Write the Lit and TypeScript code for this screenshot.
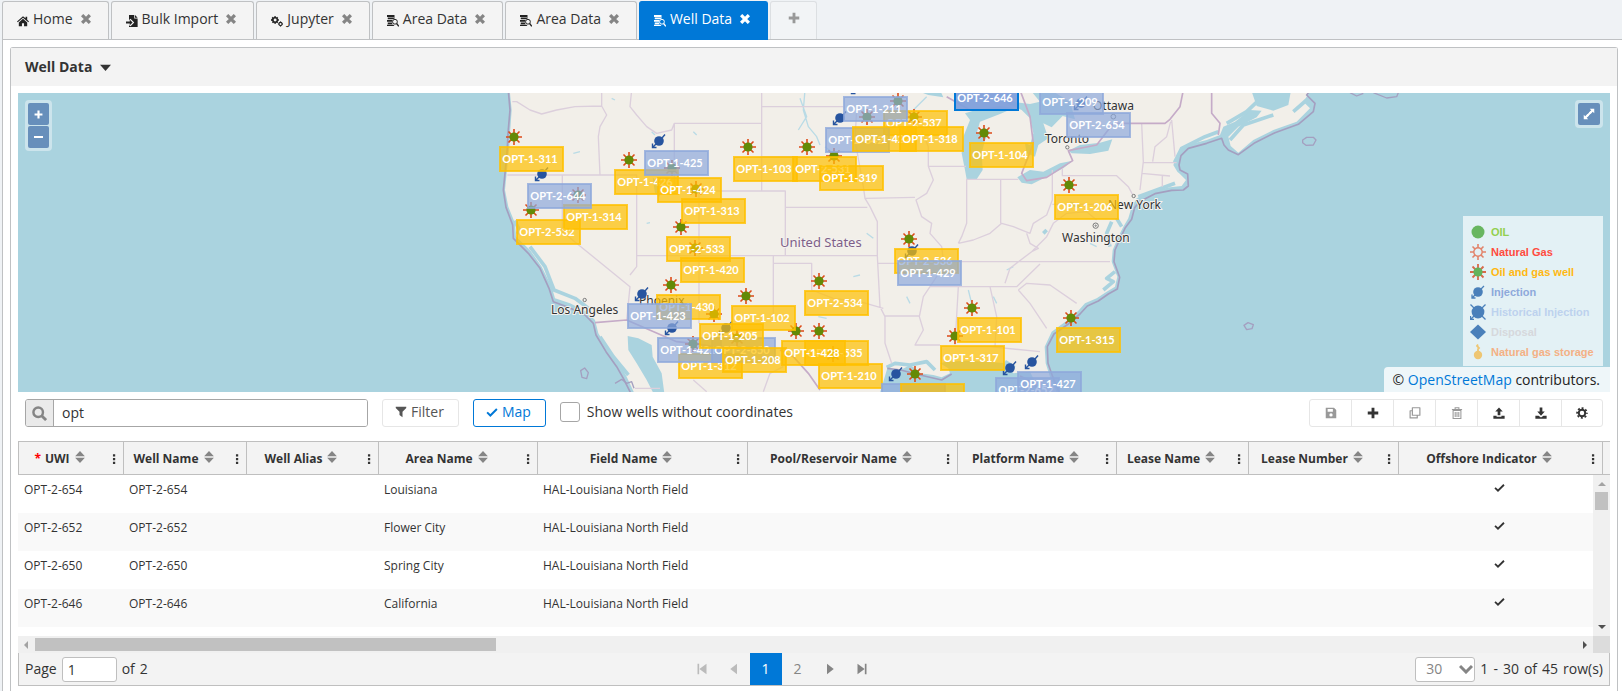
import { LitElement, html, svg, css } from "lit";
import { customElement, property, state } from "lit/decorators.js";
import { classMap } from "lit/directives/class-map.js";

const shapes: Record<string, unknown> = {
  home: svg`<path d="M8 1.5 0 8.6l1 1.2L8 3.7l7 6.1 1-1.2-2.4-2.2V2.4h-2.2v2z"/><path d="M8 5 2.4 9.900V15h4.200v-4h2.800v4h4.200V9.900z"/>`,
  import: svg`<path d="M4 0h7v4.500h4.500V16H4v-2.500l2 1.500 5-5-5-5-2 1.600z"/><path d="M12 0v3.500h3.500z"/><path d="M0 8.700h5V6.400L8.800 10 5 13.600v-2.300H0z"/>`,
  cogs: svg`<path fill-rule="evenodd" d="M4.500 1.500h2l.4 1.700 1.300-.8 1.500 1.500-.9 1.300 1.700.4v2l-1.700.5.9 1.400-1.500 1.500-1.300-.9-.4 1.700h-2l-.4-1.700-1.400.9-1.500-1.500.9-1.400L0 7.600v-2l1.700-.4-.9-1.300 1.500-1.500 1.400.8zM5.500 4.700a1.900 1.900 0 1 0 0 3.900 1.900 1.900 0 0 0 0-3.900z"/><circle cx="12.700" cy="12" r="2.100" fill="none" stroke="currentColor" stroke-width="1.500"/><path d="M12.700 8.600v1.500m0 3.800v1.500M9.300 12h1.500m3.800 0h1.500" stroke="currentColor" stroke-width="1.500"/>`,
  datasearch: svg`<path d="M0 0h10v2.500H0zM1 3.300h9.500v1L8 5.800H1zM0 6.600h7.400L6.500 9H0zM1 9.900h5.500l.8 2.300H1zM0 13h8.500l1.500 1.500H0z"/><circle cx="10.600" cy="9" r="3.200" fill="none" stroke="currentColor" stroke-width="1.300"/><path d="m12.800 11.300 3 3.900" stroke="currentColor" stroke-width="1.800"/>`,
  close: svg`<path d="m1.800 1.800 12.400 12.400m0-12.400L1.800 14.200" fill="none" stroke="currentColor" stroke-width="5.200"/>`,
  plus: svg`<path d="M8 1v14M1 8h14" fill="none" stroke="currentColor" stroke-width="3.800"/>`,
  caret: svg`<path d="M0 4h16l-8 9z"/>`,
  search: svg`<circle cx="6.600" cy="6.600" r="5.100" fill="none" stroke="currentColor" stroke-width="2.600"/><path d="m10.300 10.300 4.700 4.700" stroke="currentColor" stroke-width="3"/>`,
  filter: svg`<path d="M1 1h14v1.500l-5 5V15l-4-3V7.500l-5-5z"/>`,
  check: svg`<path d="m1.500 8.500 4.300 4.200L14.500 4" fill="none" stroke="currentColor" stroke-width="2.600"/>`,
  save: svg`<path fill-rule="evenodd" d="M1 1h11l3 3v11H1zM3.500 2.600v3.600h7V2.600zM8 8.300a2.200 2.200 0 1 0 0 4.400 2.200 2.200 0 0 0 0-4.400z"/>`,
  copy: svg`<path d="M4.500 1h10v10h-10z M4 5H1.500v9.500h9.500V11.500" fill="none" stroke="currentColor" stroke-width="1.600" stroke-linejoin="round"/>`,
  trash: svg`<path d="M2.800 4.500h10.400v10.700H2.800zM1.200 3.200h13.600M5.500 3V1h5v2M5.600 6.500v6.700M8 6.500v6.700m2.400-6.700v6.700" fill="none" stroke="currentColor" stroke-width="1.400"/>`,
  upload: svg`<path d="M8 .5 13 6h-3.200v5H6.200V6H3z"/><path d="M.5 11.500h4.300V13h6.400v-1.500h4.300v4H.5z"/>`,
  download: svg`<path d="M8 11.500 3 6h3.200V.5h3.600V6H13z"/><path d="M.5 11.500h4.300L8 14l3.200-2.500h4.300v4H.5z"/>`,
  cog: svg`<circle cx="8" cy="8" r="4.300" fill="none" stroke="currentColor" stroke-width="2.600"/><circle cx="8" cy="8" r="6.500" fill="none" stroke="currentColor" stroke-width="2.400" stroke-dasharray="2.600 2.505" stroke-dashoffset="1.300"/>`,
  sort: svg`<path d="M8 0l6.500 7h-13zM8 16l6.500-7h-13z"/>`,
  more: svg`<path d="M6.600 1.500h3v3h-3zm0 5h3v3h-3zm0 5h3v3h-3z"/>`,
  first: svg`<path d="M2 1h2.200v14H2zM14 1v14L4.500 8z"/>`,
  prev: svg`<path d="M12 1v14L3 8z"/>`,
  next: svg`<path d="M4 1v14l9-7z"/>`,
  last: svg`<path d="M11.800 1H14v14h-2.200zM2 1v14l9.500-7z"/>`,
  expand: svg`<path d="M9 1h6v6l-2-2-3 3-2-2 3-3zM7 15H1V9l2 2 3-3 2 2-3 3z"/><path d="m5 11 6-6" stroke="currentColor" stroke-width="2.400"/>`,
};

@customElement("ui-icon")
class UiIcon extends LitElement {
  @property() name = "";
  static styles = css`
    :host { display: inline-flex; width: 12px; height: 12px; flex: none; }
    svg { width: 100%; height: 100%; fill: currentColor; }
  `;
  render() {
    return html`<svg viewBox="0 0 16 16" aria-hidden="true">${shapes[this.name]}</svg>`;
  }
}

const rays = "M0-8V8M-8 0H8M-5.500-5.500 5.500 5.500M5.500-5.500-5.500 5.500";

function symbol(kind: string) {
  switch (kind) {
    case "oil":
      return svg`<circle r="6.500" fill="#68b660"/>`;
    case "gas":
      return svg`<path d=${rays} stroke="#e2836a" stroke-width="1.600"/><circle r="4.200" fill="#e3f0f4" stroke="#e2836a" stroke-width="1.400"/>`;
    case "oilgas-soft":
      return svg`<path d=${rays} stroke="#d9694a" stroke-width="1.800"/><circle r="4.600" fill="#63b35c"/>`;
    case "oilgas":
      return svg`<path d=${rays} stroke="#dd4b18" stroke-width="1.600"/><circle r="4.600" fill="#638a06"/>`;
    case "injection":
      return svg`<circle r="4.800" fill="#27549f"/><path d="M3-3 6-6.500M-3 3l-3 3M-6.500 2.500v4h4" fill="none" stroke="#27549f" stroke-width="1.400"/>`;
    case "injection-soft":
      return svg`<circle r="4.800" fill="#4a80ba"/><path d="M3-3 6-6M-3 3l-3 3M-6 2.500v3.500h3.500" fill="none" stroke="#4a80ba" stroke-width="1.300"/>`;
    case "historic":
      return svg`<circle r="6.400" fill="#4a80ba"/><path d="M-7.500-7.500l15 15M7.500-7.500l-15 15M-7.500 4v3.500h3.500" fill="none" stroke="#4a80ba" stroke-width="1.300"/>`;
    case "disposal":
      return svg`<path d="M0-7.500 8 0 0 7.500-8 0z" fill="#4a80ba"/>`;
    default:
      return svg`<circle cy="3" r="4.200" fill="#eec673"/><path d="M0 0v-3l1-1-2-2 1-1.500" fill="none" stroke="#eec673" stroke-width="1.800"/>`;
  }
}

type Well = [id: string, kind: "Y" | "B" | "S", x: number, y: number];

const wells: Well[] = [
  ["1-312", "Y", 678, 353], ["1-421", "B", 657, 337], ["2-650", "B", 711, 337],
  ["1-208", "Y", 722, 347], ["1-102", "Y", 731, 305], ["1-205", "Y", 699, 323],
  ["1-430", "Y", 656, 294], ["1-423", "B", 627, 303], ["1-210", "Y", 818, 363],
  ["2-535", "Y", 804, 340], ["1-428", "Y", 781, 340], ["2-534", "Y", 804, 290],
  ["1-420", "Y", 680, 257], ["2-533", "Y", 666, 236], ["1-313", "Y", 681, 198],
  ["1-426", "Y", 614, 169], ["1-424", "Y", 657, 177], ["1-425", "B", 644, 150],
  ["2-532", "Y", 516, 219], ["1-314", "Y", 563, 204], ["2-644", "B", 527, 183],
  ["1-311", "Y", 499, 146], ["1-103", "Y", 733, 156], ["2-531", "Y", 792, 156],
  ["1-319", "Y", 819, 165], ["2-537", "Y", 883, 110], ["2-642", "B", 825, 127],
  ["1-422", "Y", 852, 126], ["1-318", "Y", 899, 126], ["1-211", "B", 843, 96],
  ["2-646", "S", 954, 85], ["1-104", "Y", 969, 142], ["1-209", "B", 1039, 89],
  ["2-654", "B", 1066, 112], ["1-206", "Y", 1054, 194], ["2-536", "Y", 894, 248],
  ["1-429", "B", 897, 260], ["1-317", "Y", 940, 345], ["1-101", "Y", 957, 317],
  ["1-315", "Y", 1056, 327], ["2-652", "B", 995, 377], ["1-427", "B", 1017, 371],
  ["2-641", "B", 881, 383], ["1-100", "Y", 900, 383],
];

const cities: [string, number, number][] = [
  ["Los Angeles", 551, 314], ["Phoenix", 639, 305], ["Ottawa", 1093, 110],
  ["Toronto", 1045, 143], ["Washington", 1062, 242], ["New York", 1108, 209],
];

const legend: [string, string, string][] = [
  ["oil", "OIL", "c-oil"],
  ["gas", "Natural Gas", "c-gas"],
  ["oilgas-soft", "Oil and gas well", "c-both"],
  ["injection-soft", "Injection", "c-inj"],
  ["historic", "Historical Injection", "c-hist"],
  ["disposal", "Disposal", "c-disp"],
  ["storage", "Natural gas storage", "c-store"],
];

const land = `M88-10 95 60 90 130 88 170 82 230 75 300 85 350 105 400 108 440 150 480 185 530 215 590 225 625 270 640 320 665
 345 690 355 730 385 780 420 825 440 860 470 925H1195L1222 835 1262 840 1290 825 1305 835 1320 850 1360 855 1385 862 1410 850
 1405 835 1380 820 1400 815 1460 812 1520 815 1580 820 1600 850 1650 845 1665 875 1690 925H1738L1710 860 1697 820 1694 770
 1715 725 1760 692 1795 662 1815 640 1850 625 1880 605 1905 590 1912 560 1895 515 1898 480 1915 440 1930 410 1945 385 1955 350
 1970 325 2020 302 2070 292 2105 288 2118 270 2100 252 2092 245 2080 225 2095 190 2120 165 2180 150 2220 135 2230 110 2265 95
 2310 60 2345 62 2330 82 2275 110 2245 140 2252 168 2275 188 2320 150 2380 120 2450 95 2490 55 2470 35 2500-10H2435L2425 45
 2380 62 2330 48 2310-10z`;

const coast = `M84-10 90 60 84 130 82 175 77 230 70 300 78 352 98 405 100 445 145 490 180 535 207 595 220 635 265 652 315 675
 340 700 348 735 378 785 410 830 430 865 460 925M1745 925 1718 860 1704 820 1702 770 1722 732 1765 702 1800 672 1822 648
 1855 633 1885 612 1912 597 1919 562 1902 515 1905 480 1922 443 1936 413 1955 388 1964 353 1978 335 2025 311 2075 301 2110 300
 2125 288 2123 252 2100 240 2097 225 2103 197 2125 175 2180 160 2225 145 2232 165 2245 180 2275 194 2325 158 2385 128
 2455 103 2500 65 2505 40 2480 15 2500-10M1222 835 1262 840 1320 855 1385 870 1415 852M1620 858 1665 880 1680 925`;

const lakes = `M1455 70 1470 90 1450 140 1445 190 1455 240 1460 268 1490 268 1508 240 1505 190 1515 150 1530 125 1515 115
 1490 130 1500 95 1560 72 1600 55 1560 48 1480 62zM1560 30 1625 60 1650 85 1660 130 1650 165 1635 160 1640 190 1665 200
 1675 165 1705 145 1690 100 1715 112 1748 78 1785 88 1770 35 1720 5 1655 5 1680 35 1650 42zM1612 262 1650 240 1690 245
 1740 220 1778 212 1750 235 1700 260 1655 283 1625 278zM1765 182 1800 165 1860 158 1897 148 1885 182 1830 192 1775 190z
 M1305 0 1345 15 1390 22 1380 0zM443 738 475 745 515 765 518 800 545 850 555 925H528L500 870 470 820 445 780z
 M410 872 440 870 458 905 430 900zM518 262 530 275 540 320 525 310zM1150 45 1162 60 1150 72z`;

const shallows = `M104 392 118 420 112 432M150 470 195 530 222 600 285 625 325 655M360 740 400 800 445 855M1220 832 1245 820
 1290 825 1340 815 1365 840M1575 815 1600 830 1580 845M1870 600 1900 575 1880 565 1905 545M1890 470 1880 430 1895 395
 M1925 410 1910 385M1975 320 2030 300 2085 280M2100 235 2085 215 2105 175 2175 140 2215 125M2240 100 2300 65 2345 22
 M2250 150 2290 105 2380 75M2440 65 2480 30M1700 420 1690 430M1770 340 1800 350`;

const rivers = `M975 0 970 60 985 110 1010 140 1020 165M1035 170 1060 190M280 190 300 185M500 400 510 398M395 25 405 30
 M515 125 525 135M640 125 650 135M1015 680 1040 685M1280 620 1290 640M1465 600 1475 640M1580 540 1600 530M1160 430 1180 445
 M1120 560 1140 555M1830 460 1850 470M1540 620 1550 640M960 25 980 80 955 120M1340 20 1300 60`;

const borders = `M97 35 110 35 150 60 185 72 230 60 285 50 365 48V0M365 48 380 75 360 110 355 140 360 255M82 255H470V530L450 555
M247 255V425L450 590 445 640 440 690M455 0 450 50 470 75 500 110 530 130 575 120 583 100H845M583 100V303H916V497M845 0V303
M845 50H1090M845 200H940M657 303V700M470 497H1192M918 352H1162M880 497V690M880 520H995V600L1060 625 1140 635 1210 655
M1130 60 1125 150 1150 290 1155 325 1170 350 1192 395V497L1200 650 1215 680V760L1235 820M1155 325 1305 322M1195 520H1375L1370 500M1215 678H1320
M1345 170 1345 229 1360 270 1340 310 1308 330 1325 380 1355 400 1350 430 1385 470 1390 510 1370 560 1330 620 1318 680 1330 720
1305 765H1380M1345 229H1458M1458 268H1615M1460 268V400L1445 440 1435 460M1562 268V400M1435 460 1480 450 1530 430 1565 400
1600 410 1650 430 1660 400 1700 375 1717 330V240M1717 343H1920M1747 235V257H1910L1945 290 1960 318M1385 515H1890M1350 590H1610
L1680 522M1640 430 1650 460 1675 475 1655 485 1590 535 1575 580M1655 485 1700 440 1720 400 1760 370 1820 365 1850 390M1435 590 1425 765M1530 590
1550 680 1545 770M1615 600 1650 640 1700 715M1615 600 1640 580 1710 585 1790 640M1440 770H1530L1680 785M1325 120 1345 170
M2072 95 2060 140 2025 170 2018 215M1985 100 1990 215 1980 300M2075 90 2085 200M1990 218H2090M1985 250 2070 258M2047 258V290
M640 870 680 905M850 905 870 850 910 830M465 895 540 895`;

const frontiers = `M345 698 440 690 590 755 640 760 700 770M900 780 940 800 985 850 1020 900M1620 0 1650 80 1660 160 1625 250
1640 272 1700 262 1778 212 1765 182 1850 165 1900 100H2055L2070 88 2100 50 2110 0M2195 0V70L2220 100 2215 135M1400 20 1470 60`;

@customElement("well-map")
class WellMap extends LitElement {
  static styles = css`
    :host { display: block; position: relative; height: 299px; overflow: hidden; background: #aad3df; flex: none; }
    .canvas { display: block; width: 100%; height: 100%; }
    .pin { font: 700 11px Lato, "Open Sans", sans-serif; fill: #fff; text-anchor: middle; }
    .city { font: 12px "Noto Sans", sans-serif; fill: #333; stroke: #f4f2ee; stroke-width: 2px; paint-order: stroke; }
    .country { font-size: 13px; fill: #7e5f89; }
    .tag { stroke-width: 2px; fill-opacity: 0.7; stroke-opacity: 0.8; }
    .tag.Y { fill: #ffc000; stroke: #ffc000; }
    .tag.B { fill: #8ea9db; stroke: #8ea9db; }
    .tag.S { fill: #7f9fdb; fill-opacity: 0.95; stroke: #0078d7; stroke-opacity: 1; }
    .control { position: absolute; top: 7px; padding: 3px; border-radius: 4px; background: rgba(255, 255, 255, 0.4); display: grid; gap: 1px; }
    .zoom { left: 7px; }
    .full { right: 7px; }
    .control button { width: 21px; height: 22px; padding: 0; border: 0; background: #678fbb; color: #fff; display: grid; place-items: center; border-radius: 2px; }
    .zoom ui-icon { width: 9px; height: 9px; }
    .full button { width: 22px; }
    .bar { width: 9px; height: 2px; background: #fff; }
    .legend { position: absolute; right: 7px; bottom: 26px; margin: 0; padding: 6px 7px 4px; list-style: none; background: rgba(255, 255, 255, 0.67); width: 126px; font: 700 11px/20px "Liberation Sans", Arial, sans-serif; white-space: nowrap; }
    .legend li { display: flex; gap: 5px; align-items: center; height: 20px; }
    .legend svg { width: 16px; height: 16px; flex: none; }
    .c-oil { color: #92d050; }
    .c-gas { color: #ff4b3e; }
    .c-both { color: #ffb812; }
    .c-inj { color: #8ea9db; }
    .c-hist { color: #bdd2ee; }
    .c-disp { color: #d6d8dc; }
    .c-store { color: #f4b084; }
    .credit { position: absolute; right: 0; bottom: 0; padding: 0 10px 0 9px; font: 14px/25px "Open Sans", sans-serif; color: #222; background: rgba(255, 255, 255, 0.8); border-radius: 4px 0 0 0; }
    .credit a { color: #0078d7; text-decoration: none; }
  `;
  render() {
    return html`
      <svg class="canvas" viewBox="18 93 1592 299" preserveAspectRatio="xMinYMin slice" role="img" aria-label="Map of wells">
        <g transform="translate(480 90) scale(.33333)" fill="none" stroke-linejoin="round">
          <path d=${land} fill="#f2efe9" />
          <path d=${lakes} fill="#aad3df" />
          <path d=${shallows} stroke="#aad3df" stroke-width="11" />
          <path d=${rivers} stroke="#b9dbe6" stroke-width="4" />
          <path d=${borders} stroke="#dccfdc" stroke-width="4" />
          <path d=${frontiers} stroke="#c5abc8" stroke-width="5" />
          <path d=${coast} stroke="#a49fc0" stroke-width="5" />
          <g stroke="#a49fc0" stroke-width="4">
            <path d="M2468 150 2480 142 2500 142 2508 150 2500 165 2478 166 2468 158zM2292 706 2304 698 2320 704 2316 716 2300 719zM302 842 314 834 325 848 320 866 306 862zM405 880 425 868 440 880 455 875 462 895M2610 8 2630 18 2650 10M2680 8 2720 24 2750 20 2755 8" />
          </g>
          <g fill="#f4f2ee" stroke="#777" stroke-width="3">
            <circle cx="314" cy="630" r="5" /><circle cx="1762" cy="172" r="5" /><circle cx="1900" cy="80" r="7" />
            <circle cx="1847" cy="407" r="8" /><circle cx="1847" cy="407" r="2" /><circle cx="1961" cy="318" r="5" />
          </g>
        </g>
        <text class="city country" x="780" y="247">United States</text>
        ${cities.map(([name, x, y]) => svg`<text class="city" x=${x} y=${y}>${name}</text>`)}
        ${wells.map(([, kind, x, y]) => svg`<g transform="translate(${x + 15} ${y - 9})">${symbol(kind === "Y" ? "oilgas" : "injection")}</g>`)}
        ${wells.map(([id, kind, x, y]) => svg`<g>
          <rect class="tag ${kind}" x=${x + 1} y=${y + 1} width="63" height="24" />
          <text class="pin" x=${x + 31} y=${y + 17}>OPT-${id}</text></g>`)}
      </svg>
      <div class="control zoom">
        <button aria-label="Zoom in"><ui-icon name="plus"></ui-icon></button>
        <button aria-label="Zoom out"><span class="bar"></span></button>
      </div>
      <div class="control full"><button aria-label="Full screen"><ui-icon name="expand"></ui-icon></button></div>
      <ul class="legend">
        ${legend.map(([kind, text, tone]) => html`<li class=${tone}><svg viewBox="-8 -8 16 16">${symbol(kind)}</svg>${text}</li>`)}
      </ul>
      <div class="credit">© <a href="#osm">OpenStreetMap</a> contributors.</div>
    `;
  }
}

const tabs: [string, string][] = [
  ["home", "Home"], ["import", "Bulk Import"], ["cogs", "Jupyter"],
  ["datasearch", "Area Data"], ["datasearch", "Area Data"], ["datasearch", "Well Data"],
];

const columns: [string, string][] = [
  ["UWI", "w106"], ["Well Name", "w123"], ["Well Alias", "w132"], ["Area Name", "w159"], ["Field Name", "w210"],
  ["Pool/Reservoir Name", "w210"], ["Platform Name", "w159"], ["Lease Name", "w132"], ["Lease Number", "w150"],
  ["Offshore Indicator", "w204"],
];

const rows = [
  ["OPT-2-654", "Louisiana"], ["OPT-2-652", "Flower City"],
  ["OPT-2-650", "Spring City"], ["OPT-2-646", "California"],
];

const tools: [string, string, boolean][] = [
  ["save", "Save", true], ["plus", "Add", false], ["copy", "Copy", true], ["trash", "Delete", true],
  ["upload", "Upload", false], ["download", "Download", false], ["cog", "Settings", false],
];

@customElement("app-root")
class AppRoot extends LitElement {
  @state() private active = 5;
  static styles = css`
    :host { display: flex; flex-direction: column; height: 100vh; overflow: hidden; background: #eff2f5; color: #333; font: 14px/20px "Open Sans", sans-serif; }
    * { box-sizing: border-box; }
    button, input, select { font: inherit; color: inherit; margin: 0; }
    .tabs { display: flex; gap: 2px; padding: 1px 0 0 2px; height: 39px; flex: none; }
    .tab { display: flex; align-items: center; height: 38px; padding: 0 17px 3px 14px; border: 1px solid #bfc1c3; border-bottom: 0; border-radius: 3px 3px 0 0; background: #f4f4f4; }
    .tab a { display: flex; align-items: center; gap: 4px; color: #333; text-decoration: none; }
    .tab a ui-icon { color: #222; margin-top: 4px; }
    .tab button, .add { padding: 0; border: 0; background: none; color: #858585; display: flex; }
    .tab button { margin-left: 8px; }
    .tab button ui-icon { width: 10px; height: 10px; }
    .tab.active { background: #0078d7; border-color: #0078d7; height: 39px; padding-bottom: 4px; z-index: 1; }
    .tab.active a, .tab.active a ui-icon, .tab.active button { color: #fff; }
    .add { width: 47px; height: 38px; justify-content: center; align-items: center; padding-bottom: 5px; border: 1px solid #dcdfe2; border-bottom: 0; border-radius: 3px 3px 0 0; color: #999; background: #f2f4f6; }
    .page { flex: 1; min-height: 0; margin-left: 2px; padding: 7px 4px 0 7px; display: flex; background: #fff; border: 1px solid #bfc1c3; border-width: 1px 0 0 1px; }
    .panel { flex: 1; min-width: 0; display: flex; flex-direction: column; border: 1px solid #bfc1c3; border-bottom: 0; border-radius: 3px 3px 0 0; }
    .title { margin: 0; height: 38px; padding-left: 14px; display: flex; align-items: center; gap: 8px; background: #f3f3f3; font-size: 14px; font-weight: 700; }
    .title ui-icon { width: 11px; height: 11px; }
    .body { flex: 1; min-height: 0; padding: 7px 7px 5px; display: flex; flex-direction: column; }
    .toolbar { display: flex; align-items: center; gap: 14px; padding: 7px 7px 14px; flex: none; }
    .search { display: flex; width: 343px; height: 28px; border: 1px solid #a6a6a6; border-radius: 3px; overflow: hidden; }
    .search label { width: 28px; background: #eaeaea; color: #858585; border-right: 1px solid #a6a6a6; display: grid; place-items: center; }
    .search ui-icon { width: 15px; height: 15px; }
    .search input { flex: 1; min-width: 0; border: 0; padding: 0 8px; outline: 0; background: #fff; }
    .btn { height: 28px; padding: 0 14px 2px 12px; display: flex; align-items: center; gap: 4px; background: #fff; border: 1px solid #e6e6e6; border-radius: 3px; color: #555; }
    .btn.on { border-color: #0078d7; color: #0078d7; }
    .show { display: flex; align-items: center; gap: 7px; padding-bottom: 2px; }
    .show input { appearance: none; width: 20px; height: 20px; border: 1px solid #a6a6a6; border-radius: 3px; background: #fff; }
    .tools { margin-left: auto; display: flex; border: 1px solid #e6e6e6; border-radius: 3px; }
    .tools button { width: 42px; height: 26px; border: 0; border-left: 1px solid #e6e6e6; background: none; padding: 0; display: grid; place-items: center; color: #333; }
    .tools button:first-child { width: 41px; border-left: 0; }
    .tools button:last-child { width: 41px; }
    .tools button:disabled { color: #999; }
    .grid { position: relative; flex: 1; min-height: 0; overflow: hidden; }
    table { width: 100%; table-layout: fixed; border-collapse: separate; border-spacing: 0; font-size: 12px; }
    th { height: 34px; padding: 2px 0 0; background: #f3f3f3; border: 1px solid #bfbfbf; border-left: 0; font-weight: 700; white-space: nowrap; }
    th:first-child { border-left: 1px solid #bfbfbf; }
    th:last-child { border-right: 0; }
    .head { display: grid; grid-template-columns: 1fr 22px; align-items: center; }
    .head > ui-icon { margin-left: 7px; }
    .name { display: flex; justify-content: center; align-items: center; gap: 4px; }
    .name ui-icon { color: #858585; margin-bottom: 4px; }
    .req { color: #f00; }
    td { height: 38px; padding: 0 5px 8px; white-space: nowrap; }
    td:first-child { padding-left: 6px; }
    tbody tr:nth-child(even) td { background: #f9f9f9; }
    .flag { text-align: center; padding: 0 10px 10px 6px; }
    .flag ui-icon { width: 11px; height: 11px; }
    .w106 { width: 106px; } .w123 { width: 123px; } .w132 { width: 132px; } .w159 { width: 159px; }
    .w210 { width: 210px; } .w150 { width: 150px; } .w204 { width: 204px; }
    .vbar { position: absolute; right: 0; top: 34px; bottom: 0; width: 17px; background: #f0f0f0; display: flex; flex-direction: column; align-items: center; padding: 7px 0; }
    .vthumb { width: 13px; height: 18px; background: #c1c1c1; margin: 6px 0 auto; }
    .hbar { height: 17px; background: #f0f0f0; display: flex; align-items: center; flex: none; padding-left: 6px; }
    .hthumb { height: 13px; width: 461px; background: #c1c1c1; margin: 0 auto 0 7px; }
    .corner { width: 17px; height: 17px; background: #dcdcdc; margin-left: 6px; }
    .up, .down { border: 4px solid transparent; border-top: 0; border-bottom-color: #a3a3a3; }
    .down { border: 4px solid transparent; border-bottom: 0; border-top-color: #505050; }
    .left, .right { border: 4px solid transparent; border-left: 0; border-right-color: #a3a3a3; }
    .right { border: 4px solid transparent; border-right: 0; border-left-color: #505050; }
    .pager { height: 33px; flex: none; display: flex; justify-content: space-between; align-items: center; background: #f3f3f3; border: 1px solid #bfbfbf; border-top: 0; padding: 0 6px; }
    .goto, .size, .count { display: flex; align-items: center; gap: 5px; }
    .goto input { width: 55px; height: 25px; padding: 0 5px; border: 1px solid #bfbfbf; border-radius: 3px; background: #fff; }
    .pick { position: relative; display: flex; align-items: center; }
    .pick select { appearance: none; width: 60px; height: 25px; padding: 0 10px; border: 1px solid #bfbfbf; border-radius: 3px; background: #fff; color: #858585; }
    .pick svg { position: absolute; right: 2px; width: 14px; height: 10px; fill: none; stroke: #858585; stroke-width: 3; pointer-events: none; }
    .pages { display: flex; }
    .pages button { width: 32px; height: 32px; border: 0; padding: 0; background: none; color: #858585; display: grid; place-items: center; }
    .pages button:disabled { color: #bbb; }
    .pages button.now { background: #0078d7; color: #fff; }
  `;
  render() {
    return html`
      <nav class="tabs">
        ${tabs.map(([icon, text], i) => html`
          <div class=${classMap({ tab: true, active: i === this.active })}>
            <a href="#tab${i}" @click=${() => (this.active = i)}><ui-icon name=${icon}></ui-icon>${text}</a>
            <button aria-label="Close ${text}"><ui-icon name="close"></ui-icon></button>
          </div>`)}
        <button class="add" aria-label="New tab"><ui-icon name="plus"></ui-icon></button>
      </nav>
      <main class="page">
        <section class="panel">
          <h1 class="title">Well Data <ui-icon name="caret"></ui-icon></h1>
          <div class="body">
            <well-map></well-map>
            <div class="toolbar">
              <div class="search">
                <label for="query" aria-label="Search"><ui-icon name="search"></ui-icon></label>
                <input id="query" type="text" .value=${"opt"} />
              </div>
              <button class="btn"><ui-icon name="filter"></ui-icon>Filter</button>
              <button class="btn on"><ui-icon name="check"></ui-icon>Map</button>
              <label class="show"><input type="checkbox" />Show wells without coordinates</label>
              <div class="tools">
                ${tools.map(([icon, text, off]) => html`<button aria-label=${text} ?disabled=${off}><ui-icon name=${icon}></ui-icon></button>`)}
              </div>
            </div>
            <div class="grid">
              <table>
                <thead>
                  <tr>
                    ${columns.map(([text, width], i) => html`<th class=${width}>
                      <div class="head">
                        <span class="name">${i === 0 ? html`<span class="req">*</span>` : ""}${text}<ui-icon name="sort"></ui-icon></span>
                        <ui-icon name="more"></ui-icon>
                      </div></th>`)}
                    <th></th>
                  </tr>
                </thead>
                <tbody>
                  ${rows.map(([id, area]) => html`<tr>
                    <td>${id}</td><td>${id}</td><td></td><td>${area}</td><td>HAL-Louisiana North Field</td>
                    <td></td><td></td><td></td><td></td><td class="flag"><ui-icon name="check"></ui-icon></td><td></td>
                  </tr>`)}
                </tbody>
              </table>
              <div class="vbar"><i class="up"></i><i class="vthumb"></i><i class="down"></i></div>
            </div>
            <div class="hbar"><i class="left"></i><i class="hthumb"></i><i class="right"></i><i class="corner"></i></div>
            <div class="pager">
              <div class="goto"><label for="page">Page</label><input id="page" type="text" .value=${"1"} /><span>of</span><span>2</span></div>
              <div class="pages">
                <button disabled aria-label="First page"><ui-icon name="first"></ui-icon></button>
                <button disabled aria-label="Previous page"><ui-icon name="prev"></ui-icon></button>
                <button class="now">1</button>
                <button>2</button>
                <button aria-label="Next page"><ui-icon name="next"></ui-icon></button>
                <button aria-label="Last page"><ui-icon name="last"></ui-icon></button>
              </div>
              <div class="size">
                <span class="pick"><select aria-label="Rows per page"><option>30</option></select><svg viewBox="0 0 14 10"><path d="m1 2 6 6 6-6" /></svg></span>
                <span class="count">${["1", "-", "30", "of", "45", "row(s)"].map((part) => html`<span>${part}</span>`)}</span>
              </div>
            </div>
          </div>
        </section>
      </main>
    `;
  }
}
